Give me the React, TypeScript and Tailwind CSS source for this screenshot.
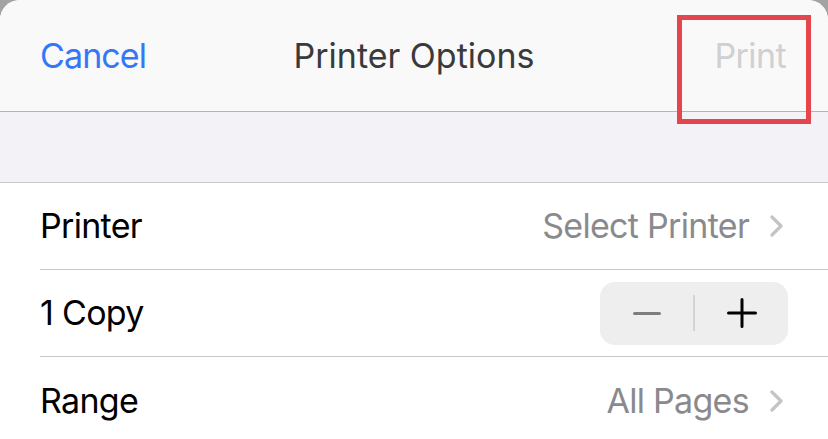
import React from "react";

function Chevron() {
  return (
    <svg width="15" height="22" viewBox="0 0 15 22" className="ml-[20px]">
      <path d="M3 2 L12 11 L3 20" fill="none" stroke="#c4c4c7" strokeWidth="3.2" strokeLinecap="round" strokeLinejoin="round" />
    </svg>
  );
}

function Row({ children, last }: { children: React.ReactNode; last?: boolean }) {
  return (
    <div className="pl-[40px]">
      <div className={`h-[87px] flex items-center justify-between pr-[44px] ${last ? "" : "border-b border-[#c8c7cc]"}`}>
        {children}
      </div>
    </div>
  );
}

export default function App() {
  return (
    <div className="w-[828px] h-[439px] bg-[#a3a3a3] overflow-hidden" style={{ fontFamily: "Inter, 'Noto Sans', sans-serif" }}>
      <div className="relative h-full bg-white rounded-t-[20px] overflow-hidden">
        <div className="h-[112px] bg-[#f9f9f9] border-b border-[#b4b4b8] flex items-center justify-between px-[40px] relative">
          <span className="text-[34px] text-[#3478f6] leading-none tracking-[-0.9px]">Cancel</span>
          <span className="absolute left-0 right-0 text-center text-[34px] text-[#3a3a3c] leading-none pointer-events-none">Printer Options</span>
          <span className="text-[34px] text-[#d0d0d2] leading-none mr-[2px] tracking-[-0.6px]">Print</span>
        </div>
        <div className="h-[71px] bg-[#f2f2f7] border-b border-[#c8c7cc]" />
        <div className="bg-white text-[34px] leading-none text-black tracking-[-0.7px]">
          <Row>
            <span>Printer</span>
            <span className="flex items-center text-[#8a8a8e]">
              Select Printer
              <Chevron />
            </span>
          </Row>
          <Row>
            <span>1 Copy</span>
            <div className="w-[188px] h-[63px] bg-[#eeeeef] rounded-[15px] flex items-center -mr-[4px]">
              <div className="flex-1 h-full flex items-center justify-center">
                <div className="w-[28px] h-[3px] bg-[#7d7d80] rounded-full" />
              </div>
              <div className="w-[2px] h-[36px] bg-[#d4d4d6]" />
              <div className="flex-1 h-full flex items-center justify-center">
                <svg width="30" height="30" viewBox="0 0 30 30">
                  <path d="M15 1.5 V28.5 M1.5 15 H28.5" stroke="#000" strokeWidth="3" strokeLinecap="round" />
                </svg>
              </div>
            </div>
          </Row>
          <Row last>
            <span>Range</span>
            <span className="flex items-center text-[#8a8a8e]">
              All Pages
              <Chevron />
            </span>
          </Row>
        </div>
        <div className="absolute left-[677px] top-[15px] w-[134px] h-[109px] border-[5px] border-[#e5454c]" />
      </div>
    </div>
  );
}
